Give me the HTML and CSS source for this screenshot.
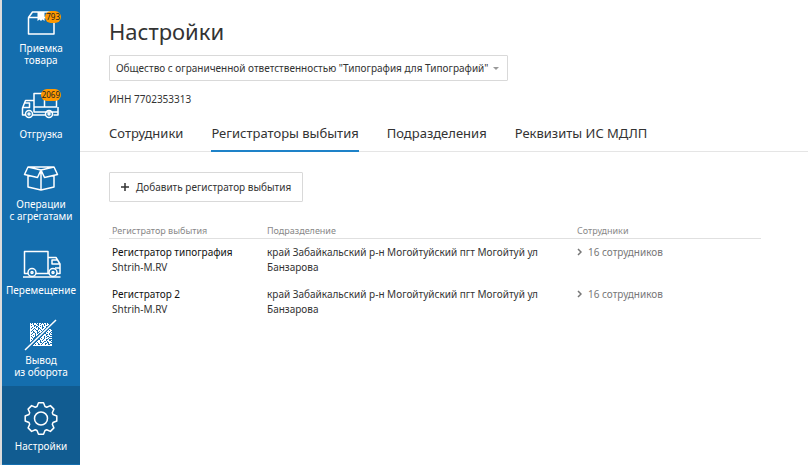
FILE: index.html
```
<!DOCTYPE html>
<html lang="ru">
<head>
    <meta charset="UTF-8">
    <meta name="viewport" content="width=device-width, initial-scale=1.0">
    <title>Настройки</title>

    <link rel="stylesheet" href="styles.css">
</head>
<body>
<nav class="menu">
    <a class="menu-item" href="#">
        <span class="menu-icon">
            <svg width="40" height="36" viewBox="0 0 40 36">
                <path d="M7.500 13.500h25.500v16.500h-25.500zM7.500 13.500l4-5.500h17.500l4 5.500"/>
                <path class="solid" d="M16.500 8h7v9l-2-1.500-1.500 1.500-1.500-1.500-2 1.500z"/>
            </svg>
            <span class="badge">793</span>
        </span>
        <span class="menu-label">Приемка<br>товара</span>
    </a>
    <a class="menu-item" href="#">
        <span class="menu-icon">
            <svg width="40" height="36" viewBox="0 0 40 36">
                <path d="M4 29H1.500v-7l3-7.500H13M1.500 21.500h7v-4.500h-5M13 7.500h10.500v13.500H13zM23.500 10h12v11h-12M11.500 29h13M13 21v5h24v3h-4.500M37 26v-5"/>
                <circle cx="8" cy="28" r="3.500"/>
                <circle cx="28" cy="28" r="3.500"/>
                <circle cx="8" cy="28" r="1"/>
                <circle cx="28" cy="28" r="1"/>
            </svg>
            <span class="badge">2069</span>
        </span>
        <span class="menu-label single">Отгрузка</span>
    </a>
    <a class="menu-item" href="#">
        <span class="menu-icon">
            <svg width="40" height="36" viewBox="0 0 40 36">
                <path d="M7 7h26M7 7l13 3 13-3 3.500 7.500-13 3L20 10l-3.500 7.500-13-3zM7 16v11l13 3 13-3V16M20 10v20"/>
            </svg>
        </span>
        <span class="menu-label">Операции<br>с агрегатами</span>
    </a>
    <a class="menu-item" href="#">
        <span class="menu-icon">
            <svg width="40" height="36" viewBox="0 0 40 36">
                <path d="M7 31.500H3.500v-22H27v22H15M27 15.500h8l4 6.500v9.500h-3M39 22h-8v-4h5M28 31.500H27M2 35h37.500M34 26h5"/>
                <circle cx="11" cy="30.500" r="4"/>
                <circle cx="32" cy="30.500" r="4"/>
                <circle cx="11" cy="30.500" r="1"/>
                <circle cx="32" cy="30.500" r="1"/>
            </svg>
        </span>
        <span class="menu-label single">Перемещение</span>
    </a>
    <a class="menu-item" href="#">
        <span class="menu-icon">
            <svg width="40" height="36" viewBox="0 0 40 36">
                <g class="code" transform="translate(0 .5)">
                    <path d="M9 7h1M11 7h1M13 7h2M16 7h1M18 7h2M21 7h1M23 7h2M26 7h1M9 8h3M13 8h3M18 8h1M20 8h3M24 8h1M26 8h2M9 9h1M11 9h2M15 9h2M18 9h3M22 9h1M24 9h3M9 10h4M14 10h1M17 10h2M20 10h1M22 10h3M9 11h2M12 11h3M16 11h1M18 11h3M23 11h2M9 12h1M11 12h2M14 12h3M19 12h2M22 12h2M9 13h3M13 13h1M15 13h2M18 13h1M20 13h3M28 13h2M9 14h2M12 14h3M17 14h3M21 14h1M27 14h1M29 14h2M9 15h1M11 15h1M13 15h3M17 15h1M19 15h2M26 15h4M9 16h3M14 16h2M18 16h2M25 16h1M27 16h2M30 16h1M9 17h2M12 17h2M15 17h1M17 17h1M25 17h3M29 17h1M9 18h1M11 18h3M15 18h2M23 18h2M27 18h1M29 18h2"/>
                    <path d="M9 19h3M13 19h1M15 19h1M22 19h3M26 19h3M9 20h1M11 20h3M21 20h2M24 20h2M28 20h3M9 21h2M12 21h1M20 21h3M24 21h1M26 21h2M9 22h3M19 22h1M21 22h2M24 22h3M28 22h3M9 23h1M11 23h1M19 23h3M23 23h2M27 23h1M9 24h2M17 24h2M20 24h1M22 24h3M26 24h2M30 24h1M9 25h1M16 25h3M20 25h3M25 25h1M27 25h3M15 26h1M17 26h2M21 26h1M23 26h3M28 26h3M14 27h3M18 27h3M22 27h2M26 27h1M28 27h1M13 28h1M15 28h2M19 28h1M21 28h3M25 28h2M29 28h2M12 29h19"/>
                </g>
                <path d="M4 34L35 4"/>
            </svg>
        </span>
        <span class="menu-label">Вывод<br>из оборота</span>
    </a>
    <a class="menu-item active" href="#">
        <span class="menu-icon">
            <svg width="40" height="36" viewBox="0 0 40 36">
                <g transform="translate(20 20.500)">
                    <path d="M-4-12L-2.500-15.800H2.500L4-12 5.700-11.300 9.400-12.900 12.900-9.400 11.300-5.700 12-4 15.800-2.500V2.500L12 4 11.300 5.700 12.900 9.400 9.400 12.900 5.700 11.300 4 12 2.500 15.800H-2.500L-4 12-5.700 11.300-9.400 12.900-12.900 9.400-11.300 5.700-12 4-15.800 2.500V-2.500L-12-4-11.300-5.700-12.900-9.400-9.400-12.900-5.700-11.300Z"/>
                    <circle r="6.500"/>
                </g>
            </svg>
        </span>
        <span class="menu-label single">Настройки</span>
    </a>
</nav>

<main class="content">
    <h1>Настройки</h1>
    <div class="company">
        <select aria-label="Организация">
            <option>Общество с ограниченной ответственностью "Типография для Типографий"</option>
        </select>
        <svg class="company-arrow" width="6" height="3" viewBox="0 0 6 3"><path d="M0 0h6L3 3z"/></svg>
    </div>
    <p class="inn">ИНН 7702353313</p>

    <nav class="tabs">
        <a href="#">Сотрудники</a>
        <a class="current" href="#">Регистраторы выбытия</a>
        <a href="#">Подразделения</a>
        <a href="#">Реквизиты ИС МДЛП</a>
    </nav>

    <button class="add" type="button">
        <svg width="8" height="8" viewBox="0 0 8 8"><path d="M4 0v8M0 4h8"/></svg>
        Добавить регистратор выбытия
    </button>

    <table>
        <thead>
        <tr>
            <th class="col-name">Регистратор выбытия</th>
            <th class="col-place">Подразделение</th>
            <th>Сотрудники</th>
        </tr>
        </thead>
        <tbody>
        <tr>
            <td><span class="name">Регистратор типография</span><br>Shtrih-M.RV</td>
            <td>край Забайкальский р-н Могойтуйский пгт Могойтуй ул Банзарова</td>
            <td><a class="staff" href="#"><svg width="5" height="8" viewBox="0 0 5 8"><path d="M1 1l3 3-3 3"/></svg>16 сотрудников</a></td>
        </tr>
        <tr>
            <td><span class="name">Регистратор 2</span><br>Shtrih-M.RV</td>
            <td>край Забайкальский р-н Могойтуйский пгт Могойтуй ул Банзарова</td>
            <td><a class="staff" href="#"><svg width="5" height="8" viewBox="0 0 5 8"><path d="M1 1l3 3-3 3"/></svg>16 сотрудников</a></td>
        </tr>
        </tbody>
    </table>
</main>
</body>
</html>
```
FILE: styles.css
```
* {
    box-sizing: border-box;
}

body {
    display: flex;
    min-height: 100vh;
    margin: 0;
    color: #333;
    background-color: white;
    font-family: "Noto Sans", "Open Sans", sans-serif;
    font-size: 10px;
    line-height: 15px;
}

a {
    color: inherit;
    text-decoration: none;
}

.menu {
    flex: none;
    width: 80px;
    border-left: 2px solid #dcdcdc;
    background-color: #146eae;
}

.menu-item {
    display: flex;
    flex-direction: column;
    align-items: center;
    padding: 12px 0 8px;
    color: white;
    line-height: 12px;
    text-align: center;
}

.menu-item:first-child {
    padding-top: 4px;
}

.menu-item.active {
    padding-bottom: 12px;
    background-color: #115c91;
}

.menu-icon {
    position: relative;
    height: 36px;
    margin-bottom: 2px;
}

.menu-icon svg {
    display: block;
    overflow: visible;
    fill: none;
    stroke: white;
    stroke-width: 1.5;
    stroke-linejoin: round;
}

.menu-icon .solid {
    fill: white;
    stroke: none;
}

.menu-icon .code {
    stroke-width: 1;
}

.menu-label {
    white-space: nowrap;
}

.menu-label.single {
    padding-top: 4px;
}

.badge {
    position: absolute;
    top: 7px;
    right: 0;
    padding: 0 1px;
    border-radius: 6px;
    color: #222;
    background-color: #f90;
    font-size: 8px;
    line-height: 12px;
}

.menu-item:nth-child(2) .badge {
    top: 3px;
}

.content {
    flex: 1;
    min-width: 0;
    padding-top: 15px;
}

.content > * {
    margin-left: 29px;
}

h1 {
    margin: 0 0 8px;
    font-size: 22px;
    font-weight: normal;
    line-height: 32px;
}

.company {
    display: flex;
    align-items: center;
    width: fit-content;
}

select {
    height: 26px;
    padding: 0 18px 0 6px;
    border: 1px solid #d9d9d9;
    border-radius: 1px;
    color: inherit;
    background-color: white;
    font: inherit;
    appearance: none;
}

.company-arrow {
    margin-left: -15px;
    fill: #999;
    pointer-events: none;
}

.inn {
    margin-top: 11px;
    margin-bottom: 0;
}

.content .tabs {
    display: flex;
    gap: 28px;
    margin: 16px 0 20px;
    padding-left: 29px;
    border-bottom: 1px solid #e5e5e5;
    font-size: 13px;
    line-height: 20px;
}

.tabs a {
    margin-bottom: -1px;
    padding-bottom: 7px;
    border-bottom: 2px solid transparent;
}

.tabs .current {
    border-color: #1e82c8;
}

.add {
    display: flex;
    align-items: center;
    gap: 7px;
    height: 30px;
    padding: 0 11px;
    border: 1px solid #d9d9d9;
    border-radius: 1px;
    color: inherit;
    background-color: white;
    font: inherit;
    cursor: pointer;
}

.add svg {
    stroke: #333;
    stroke-width: 1.5;
}

table {
    width: calc(100% - 76px);
    margin-top: 19px;
    border-collapse: collapse;
    table-layout: fixed;
}

th {
    padding: 2px 3px 0;
    border-bottom: 1px solid #e0e0e0;
    color: #888;
    font-size: 9px;
    font-weight: normal;
    text-align: left;
}

.col-name {
    width: 155px;
}

.col-place {
    width: 310px;
}

td {
    padding: 6px 3px;
    vertical-align: top;
}

.name {
    color: #111;
}

.staff {
    color: #777;
}

.staff svg {
    margin-right: 6px;
    fill: none;
    stroke: #777;
    stroke-width: 1.5;
}
```
